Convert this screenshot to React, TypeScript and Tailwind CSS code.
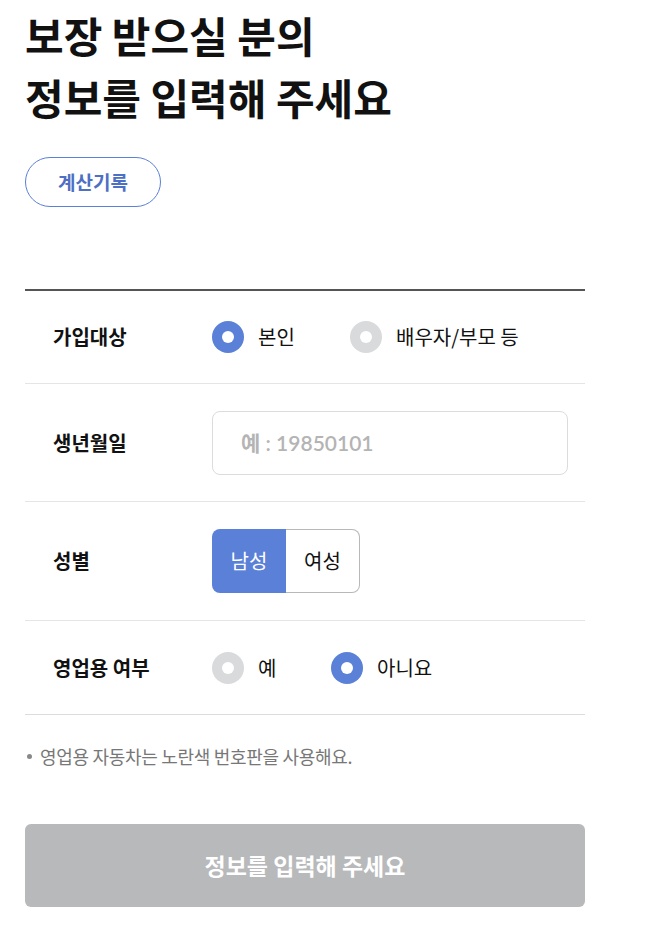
import React from "react";

const font = { fontFamily: '"Noto Sans CJK KR", "Noto Sans", sans-serif' };

function Radio({ checked, label }: { checked: boolean; label: string }) {
  return (
    <div className="flex items-center">
      <span
        className={`flex h-[32px] w-[32px] items-center justify-center rounded-full ${
          checked ? "bg-[#5a80d8]" : "bg-[#d9dadc]"
        }`}
      >
        <span className="h-[12px] w-[12px] rounded-full bg-white" />
      </span>
      <span className="ml-[14px] text-[20px] text-[#111]">{label}</span>
    </div>
  );
}

export default function App() {
  return (
    <div className="min-h-screen bg-white px-[25px] text-[#111]" style={font}>
      <div className="w-[560px]">
        <h1 className="pt-[4px] text-[42px] font-bold leading-[62px] text-[#111]">
          보장 받으실 분의
          <br />
          정보를 입력해 주세요
        </h1>
        <button className="mt-[29px] h-[50px] w-[136px] rounded-full border border-[#5a80d8] text-[19px] font-bold text-[#4d6fc4]">
          계산기록
        </button>

        <div className="mt-[82px] border-t-2 border-[#555]">
          <div className="flex h-[93px] items-center border-b border-[#e5e5e5] pl-[28px]">
            <span className="w-[159px] text-[20px] font-bold">가입대상</span>
            <div className="flex items-center">
              <div className="w-[138px]">
                <Radio checked label="본인" />
              </div>
              <Radio checked={false} label="배우자/부모 등" />
            </div>
          </div>

          <div className="flex h-[118px] items-center border-b border-[#e5e5e5] pl-[28px]">
            <span className="w-[159px] text-[20px] font-bold">생년월일</span>
            <div className="flex h-[64px] w-[356px] items-center rounded-[8px] border border-[#dcdcdc] pl-[28px]">
              <span
                className="text-[21px] font-semibold text-[#b4b4b4]"
                style={{ fontFamily: 'Lato, "Noto Sans CJK KR", sans-serif' }}
              >
                예 : 19850101
              </span>
            </div>
          </div>

          <div className="flex h-[119px] items-center border-b border-[#e5e5e5] pl-[28px]">
            <span className="w-[159px] text-[20px] font-bold">성별</span>
            <div className="flex h-[64px]">
              <div className="flex w-[74px] items-center justify-center rounded-l-[8px] bg-[#5a80d8] text-[20px] text-white">
                남성
              </div>
              <div className="flex w-[74px] items-center justify-center rounded-r-[8px] border border-l-0 border-[#b8b8b8] text-[20px] text-[#111]">
                여성
              </div>
            </div>
          </div>

          <div className="flex h-[94px] items-center border-b border-[#dcdcdc] pl-[28px]">
            <span className="w-[159px] text-[20px] font-bold">영업용 여부</span>
            <div className="flex items-center">
              <div className="w-[119px]">
                <Radio checked={false} label="예" />
              </div>
              <Radio checked label="아니요" />
            </div>
          </div>
        </div>

        <div className="mt-[28px] flex items-center pl-[2px] text-[18px] tracking-[-0.3px] text-[#777]">
          <span className="mr-[8px] h-[5px] w-[5px] rounded-full bg-[#888]" />
          영업용 자동차는 노란색 번호판을 사용해요.
        </div>

        <button className="mt-[54px] flex h-[83px] w-[560px] items-center justify-center rounded-[6px] bg-[#b8b9bb] text-[23px] font-bold text-white">
          정보를 입력해 주세요
        </button>
      </div>
    </div>
  );
}
